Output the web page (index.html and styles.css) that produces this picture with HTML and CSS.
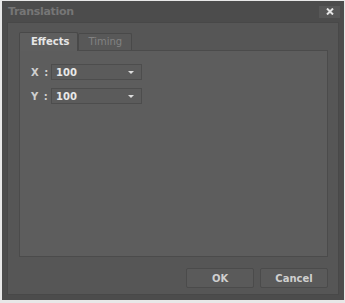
FILE: index.html
```html
<!DOCTYPE html>
<html>
<head>
<meta charset="utf-8">
<link rel="stylesheet" href="styles.css">
</head>
<body>
<div class="dialog">
  <div class="titlebar">
    <span class="title">Translation</span>
    <span class="close"><svg width="8" height="7" viewBox="0 0 8 7"><path d="M1 0.5 L7 6.5 M7 0.5 L1 6.5" stroke="#e4e4e4" stroke-width="2"/></svg></span>
  </div>
  <div class="frame">
    <div class="tabs">
      <div class="tab active">Effects</div>
      <div class="tab">Timing</div>
    </div>
    <div class="panel">
      <div class="row">
        <span class="lbl">X :</span>
        <div class="select"><span>100</span><span class="arrow"></span></div>
      </div>
      <div class="row">
        <span class="lbl">Y :</span>
        <div class="select"><span>100</span><span class="arrow"></span></div>
      </div>
    </div>
    <div class="buttons">
      <div class="btn">OK</div>
      <div class="btn">Cancel</div>
    </div>
  </div>
</div>
</body>
</html>
```
FILE: styles.css
```css
html, body {
  margin: 0;
  padding: 0;
  background: #e8e8e8;
  width: 345px;
  height: 303px;
  overflow: hidden;
}
body {
  padding: 1px 1px 0 2px;
  box-sizing: border-box;
  font-family: "DejaVu Sans", sans-serif;
}
.dialog {
  width: 342px;
  height: 299px;
  background: #4c4c4c;
  display: flex;
  flex-direction: column;
  box-sizing: border-box;
}
.titlebar {
  height: 21px;
  display: flex;
  align-items: center;
  justify-content: space-between;
  padding: 0 4px 0 6px;
  flex: none;
}
.title {
  color: #767676;
  font-size: 11px;
  font-weight: bold;
  letter-spacing: -0.3px;
}
.close {
  width: 21px;
  height: 12px;
  background: #575757;
  display: flex;
  align-items: center;
  justify-content: center;
}
.frame {
  flex: 1;
  margin: 0 5px 5px 5px;
  background: #565656;
  border: 1px solid #484848;
  display: flex;
  flex-direction: column;
  padding: 9px 10px 0 11px;
}
.tabs {
  display: flex;
  align-items: flex-end;
  height: 18px;
  flex: none;
}
.tab {
  font-size: 10px;
  color: #828282;
  padding: 0 9px;
  height: 16px;
  line-height: 16px;
  background: #585858;
  border: 1px solid #494949;
  border-bottom: none;
  border-radius: 2px 2px 0 0;
}
.tab.active {
  height: 18px;
  line-height: 18px;
  background: #5e5e5e;
  color: #e6e6e6;
  font-weight: bold;
  padding: 0 8px 0 11px;
  position: relative;
  top: 1px;
}
.panel {
  height: 207px;
  box-sizing: border-box;
  background: #5d5d5d;
  border: 1px solid #4b4b4b;
  padding: 13px 0 0 11px;
  display: flex;
  flex-direction: column;
  gap: 8px;
  flex: none;
}
.row {
  display: flex;
  align-items: center;
}
.lbl {
  width: 20px;
  color: #cfcfcf;
  font-size: 10px;
  font-weight: bold;
  letter-spacing: 1px;
}
.select {
  width: 91px;
  height: 16px;
  box-sizing: border-box;
  border: 1px solid #4d4d4d;
  background: #5b5b5b;
  color: #e8e8e8;
  font-size: 10px;
  font-weight: bold;
  display: flex;
  align-items: center;
  justify-content: space-between;
  padding: 0 7px 0 4px;
}
.arrow {
  width: 0;
  height: 0;
  border-left: 3px solid transparent;
  border-right: 3px solid transparent;
  border-top: 3px solid #dddddd;
}
.buttons {
  display: flex;
  justify-content: flex-end;
  gap: 6px;
  margin-top: 11px;
  padding-right: 0;
}
.btn {
  width: 68px;
  height: 20px;
  box-sizing: border-box;
  border: 1px solid #4b4b4b;
  border-radius: 2px;
  background: #5a5a5a;
  color: #cfcfcf;
  font-size: 10px;
  font-weight: bold;
  display: flex;
  align-items: center;
  justify-content: center;
}
```
